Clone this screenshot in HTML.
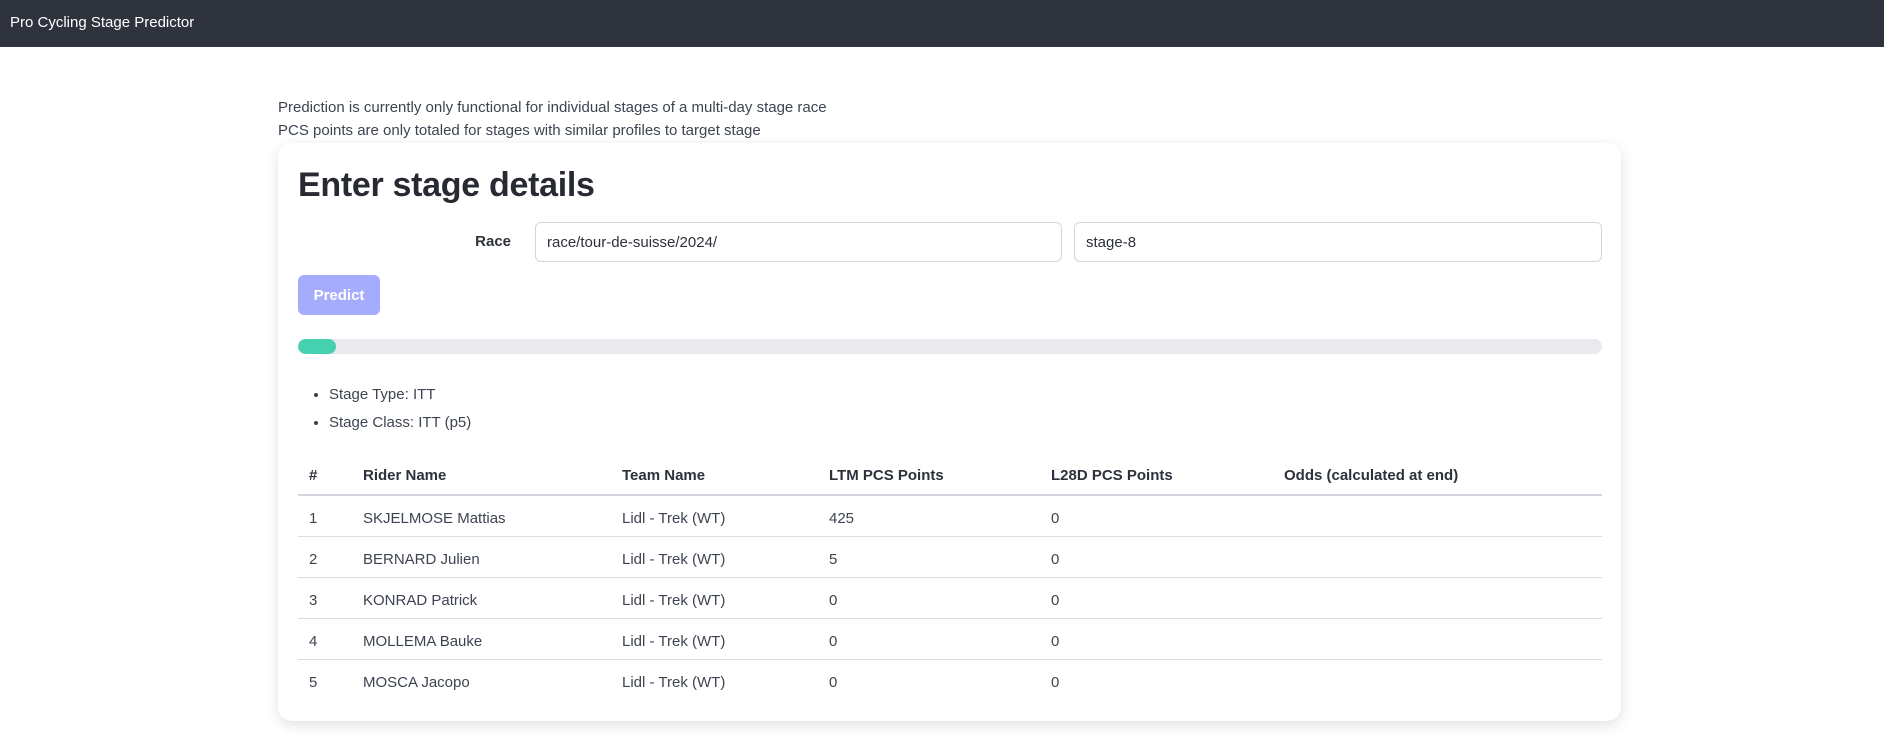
<!DOCTYPE html>
<html><head><meta charset="utf-8"><style>
*{box-sizing:border-box;margin:0;padding:0}
body{width:1884px;height:744px;background:#fff;font-family:"Liberation Sans",sans-serif;color:#3d4451;position:relative;overflow:hidden}
.hdr{position:absolute;left:0;top:0;width:1884px;height:47px;background:#2f333e;color:#fff;font-size:15px;line-height:45px;padding-left:10px}
.p{position:absolute;left:278px;font-size:15px}
.card{position:absolute;left:278px;top:143px;width:1343px;height:578px;border-radius:14px;background:#fff;box-shadow:0 4px 14px rgba(0,0,0,.12)}
h1{position:absolute;left:20px;top:23px;font-size:34px;font-weight:bold;color:#272a33;letter-spacing:-0.3px}
.lbl{position:absolute;right:1110px;top:90px;font-size:15px;font-weight:bold;color:#2d313b}
.in{position:absolute;top:79px;height:40px;border:1px solid #d3d5da;border-radius:6px;font-size:15px;line-height:40px;padding-left:11px;color:#2d313b}
.btn{position:absolute;left:20px;top:132px;width:82px;height:40px;border-radius:6px;background:#a6acfd;color:#fff;font-weight:bold;font-size:15px;text-align:center;line-height:42px}
.bar{position:absolute;left:20px;top:196px;width:1304px;height:15px;border-radius:8px;background:#e9e9ee;overflow:hidden}
.bar div{width:38px;height:100%;background:#45d0b0;border-radius:8px}
ul{position:absolute;left:51px;top:238px;font-size:15px;line-height:28px}
table{position:absolute;left:20px;top:312px;width:1304px;border-collapse:collapse;font-size:15px}
th{text-align:left;font-weight:bold;height:40px;padding-top:2px;border-bottom:2px solid #d3d4dc;color:#2d313b}
td{height:41px;padding-top:6px;border-bottom:1px solid #dcdde2}
tr:last-child td{border-bottom:none}
</style></head><body>
<div class="hdr">Pro Cycling Stage Predictor</div>
<div class="p" style="top:99px">Prediction is currently only functional for individual stages of a multi-day stage race</div>
<div class="p" style="top:122px">PCS points are only totaled for stages with similar profiles to target stage</div>
<div class="card">
<h1>Enter stage details</h1>
<div class="lbl">Race</div>
<div class="in" style="left:257px;width:527px">race/tour-de-suisse/2024/</div>
<div class="in" style="left:796px;width:528px">stage-8</div>
<div class="btn">Predict</div>
<div class="bar"><div></div></div>
<ul><li>Stage Type: ITT</li><li>Stage Class: ITT (p5)</li></ul>
<table>
<colgroup><col style="width:65px"><col style="width:259px"><col style="width:207px"><col style="width:222px"><col style="width:233px"><col></colgroup>
<tr><th style="padding-left:11px">#</th><th>Rider Name</th><th>Team Name</th><th>LTM PCS Points</th><th>L28D PCS Points</th><th>Odds (calculated at end)</th></tr>
<tr><td style="padding-left:11px">1</td><td>SKJELMOSE Mattias</td><td>Lidl - Trek (WT)</td><td>425</td><td>0</td><td></td></tr>
<tr><td style="padding-left:11px">2</td><td>BERNARD Julien</td><td>Lidl - Trek (WT)</td><td>5</td><td>0</td><td></td></tr>
<tr><td style="padding-left:11px">3</td><td>KONRAD Patrick</td><td>Lidl - Trek (WT)</td><td>0</td><td>0</td><td></td></tr>
<tr><td style="padding-left:11px">4</td><td>MOLLEMA Bauke</td><td>Lidl - Trek (WT)</td><td>0</td><td>0</td><td></td></tr>
<tr><td style="padding-left:11px">5</td><td>MOSCA Jacopo</td><td>Lidl - Trek (WT)</td><td>0</td><td>0</td><td></td></tr>
</table>
</div>
</body></html>
